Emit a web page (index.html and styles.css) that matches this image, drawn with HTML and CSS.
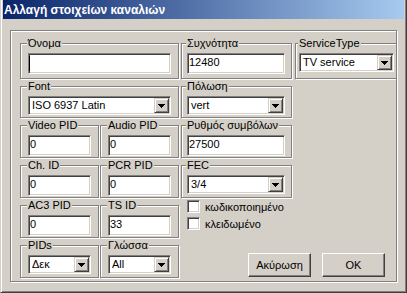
FILE: index.html
```html
<!DOCTYPE html>
<html lang="el">
<head>
<meta charset="utf-8">
<title>Αλλαγή στοιχείων καναλιών</title>
<link rel="stylesheet" href="styles.css">
</head>
<body>
<div class="window">
  <div class="titlebar">Αλλαγή στοιχείων καναλιών</div>
  <div class="client">
    <div class="panel">
      <fieldset class="group col-ab"><legend>Όνομα</legend><div class="edit"><span class="caret"></span></div></fieldset>
      <fieldset class="group col-c"><legend>Συχνότητα</legend><div class="edit">12480</div></fieldset>
      <fieldset class="group col-d"><legend>ServiceType</legend>
        <div class="combo"><span class="combo-text">TV service</span><span class="drop"><svg width="7" height="4" viewBox="0 0 7 4"><path d="M0 0h7v1H0zM1 1h5v1H1zM2 2h3v1H2zM3 3h1v1H3z"/></svg></span></div>
      </fieldset>

      <fieldset class="group col-ab"><legend>Font</legend>
        <div class="combo"><span class="combo-text">ISO 6937 Latin</span><span class="drop"><svg width="7" height="4" viewBox="0 0 7 4"><path d="M0 0h7v1H0zM1 1h5v1H1zM2 2h3v1H2zM3 3h1v1H3z"/></svg></span></div>
      </fieldset>
      <fieldset class="group col-c"><legend>Πόλωση</legend>
        <div class="combo"><span class="combo-text">vert</span><span class="drop"><svg width="7" height="4" viewBox="0 0 7 4"><path d="M0 0h7v1H0zM1 1h5v1H1zM2 2h3v1H2zM3 3h1v1H3z"/></svg></span></div>
      </fieldset>

      <fieldset class="group col-a"><legend>Video PID</legend><div class="edit">0</div></fieldset>
      <fieldset class="group col-b"><legend>Audio PID</legend><div class="edit">0</div></fieldset>
      <fieldset class="group col-c"><legend>Ρυθμός συμβόλων</legend><div class="edit">27500</div></fieldset>

      <fieldset class="group col-a"><legend>Ch. ID</legend><div class="edit">0</div></fieldset>
      <fieldset class="group col-b"><legend>PCR PID</legend><div class="edit">0</div></fieldset>
      <fieldset class="group col-c"><legend>FEC</legend>
        <div class="combo"><span class="combo-text">3/4</span><span class="drop"><svg width="7" height="4" viewBox="0 0 7 4"><path d="M0 0h7v1H0zM1 1h5v1H1zM2 2h3v1H2zM3 3h1v1H3z"/></svg></span></div>
      </fieldset>

      <fieldset class="group col-a"><legend>AC3 PID</legend><div class="edit">0</div></fieldset>
      <fieldset class="group col-b"><legend>TS ID</legend><div class="edit">33</div></fieldset>
      <div class="checks">
        <div class="check"><span class="box"></span><span class="check-label">κωδικοποιημένο</span></div>
        <div class="check"><span class="box"></span><span class="check-label">κλειδωμένο</span></div>
      </div>

      <fieldset class="group col-a"><legend>PIDs</legend>
        <div class="combo"><span class="combo-text">Δεκ</span><span class="drop"><svg width="7" height="4" viewBox="0 0 7 4"><path d="M0 0h7v1H0zM1 1h5v1H1zM2 2h3v1H2zM3 3h1v1H3z"/></svg></span></div>
      </fieldset>
      <fieldset class="group col-b"><legend>Γλώσσα</legend>
        <div class="combo"><span class="combo-text">All</span><span class="drop"><svg width="7" height="4" viewBox="0 0 7 4"><path d="M0 0h7v1H0zM1 1h5v1H1zM2 2h3v1H2zM3 3h1v1H3z"/></svg></span></div>
      </fieldset>
      <div class="buttons">
        <div class="btn">Ακύρωση</div>
        <div class="btn">OK</div>
      </div>
    </div>
  </div>
</div>
</body>
</html>
```

FILE: styles.css
```css
* { box-sizing: border-box; }

html, body {
  margin: 0;
  padding: 0;
}

body {
  width: 407px;
  height: 293px;
  overflow: hidden;
  background: #d4d0c8;
  font-family: "Liberation Sans", Arial, sans-serif;
  font-size: 11px;
  color: #000;
}

.window {
  width: 407px;
  height: 293px;
  border-left: 1px solid #d4d0c8;
  border-right: 1px solid #404040;
  border-bottom: 1px solid #404040;
  box-shadow: inset 1px 0 0 #fff, inset -1px -1px 0 #808080;
  padding: 0 2px 2px 2px;
  display: flex;
  flex-direction: column;
}

.titlebar {
  height: 19px;
  background: linear-gradient(to right, #0a246a, #a6caf0);
  color: #fff;
  font-size: 12px;
  font-weight: bold;
  line-height: 13px;
  padding: 4px 0 0 1px;
  white-space: nowrap;
}

.client {
  flex: 1;
  padding: 11px 0 0 7px;
}

.panel {
  width: 387px;
  border: 1px solid #808080;
  box-shadow: inset 1px 1px 0 #fff, 1px 1px 0 #fff;
  padding: 6px 0 2px 9px;
  overflow: hidden;
  display: grid;
  grid-template-columns: 80px 80px 113px 103px;
  grid-template-rows: 43px 39px 40px 40px 40px 40px;
}

.group {
  margin: 0 1px 1px 0;
  padding: 0 7px;
  min-width: 0;
  border: 1px solid #808080;
  box-shadow: inset 1px 1px 0 #fff, 1px 1px 0 #fff;
}

.group legend {
  padding: 0 1px;
  margin-left: -1px;
  line-height: 13px;
  background: #d4d0c8;
  white-space: nowrap;
}

.col-ab { grid-column: 1 / 3; }
.col-a { grid-column: 1; }
.col-b { grid-column: 2; }
.col-c { grid-column: 3; margin-left: 1px; padding: 0 6px 0 5px; }
.col-d { grid-column: 4; margin-left: 2px; margin-right: -10px; padding: 0 11px 0 3px; }

.edit {
  height: 21px;
  margin-top: 3px;
  padding: 1px 1px;
  line-height: 14px;
  background: #fff;
  border: 1px solid;
  border-color: #808080 #fff #fff #808080;
  box-shadow: inset 1px 1px 0 #404040, inset -1px -1px 0 #d4d0c8;
  white-space: nowrap;
  overflow: hidden;
}

.caret {
  display: block;
  width: 1px;
  height: 15px;
  margin: 1px 0 0 -1px;
  background: #000;
}

.combo {
  height: 19px;
  margin-top: 3px;
  padding: 1px;
  display: flex;
  background: #fff;
  border: 1px solid;
  border-color: #808080 #fff #fff #808080;
  box-shadow: inset 1px 1px 0 #404040, inset -1px -1px 0 #d4d0c8;
}

.combo-text {
  flex: 1;
  padding: 0 0 0 2px;
  line-height: 14px;
  white-space: nowrap;
  overflow: hidden;
}

.drop {
  width: 15px;
  flex: none;
  display: flex;
  align-items: center;
  justify-content: center;
  background: #d4d0c8;
  border: 1px solid;
  border-color: #d4d0c8 #404040 #404040 #d4d0c8;
  box-shadow: inset 1px 1px 0 #fff, inset -1px -1px 0 #808080;
}

.drop svg {
  display: block;
  fill: #000;
  margin-top: 1px;
}

.checks {
  grid-column: 3;
  padding: 1px 0 0 7px;
}

.check {
  display: flex;
  height: 17px;
}

.box {
  width: 13px;
  height: 13px;
  flex: none;
  background: #fff;
  border: 1px solid;
  border-color: #808080 #fff #fff #808080;
  box-shadow: inset 1px 1px 0 #404040, inset -1px -1px 0 #d4d0c8;
}

.check-label {
  margin-left: 5px;
  line-height: 15px;
  white-space: nowrap;
}

.buttons {
  grid-column: 3 / 5;
  display: flex;
  justify-content: flex-end;
  align-items: flex-end;
  gap: 11px;
  padding: 0 11px 2px 0;
}

.btn {
  width: 63px;
  height: 24px;
  display: flex;
  align-items: center;
  justify-content: center;
  border: 1px solid;
  border-color: #fff #404040 #404040 #fff;
  box-shadow: inset -1px -1px 0 #808080;
}
```
